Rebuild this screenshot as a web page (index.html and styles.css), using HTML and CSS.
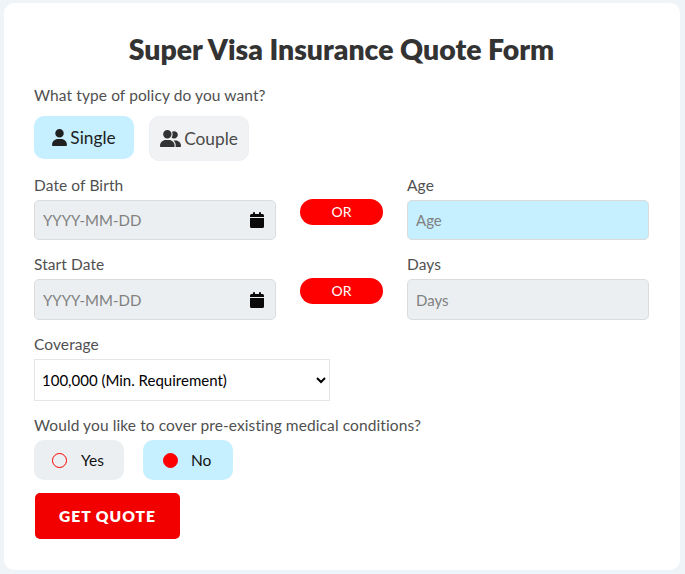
FILE: index.html
```html
<!DOCTYPE html>
<html lang="en">
<head>
    <meta charset="UTF-8">
    <meta name="viewport" content="width=device-width, initial-scale=1.0">
    <title>Super Visa Insurance Quote Form</title>
    <link rel="stylesheet" href="styles.css">
</head>
<body>
    <form class="quote-form">
        <h1>Super Visa Insurance Quote Form</h1>

        <div class="form-group">
            <p class="label">What type of policy do you want?</p>
            <div class="policy-options">
                <button type="button" class="policy-btn active">
                    <svg class="icon-user" viewBox="0 0 448 512"><path d="M224 256A128 128 0 1 0 224 0a128 128 0 1 0 0 256zm-45.7 48C79.8 304 0 383.800 0 482.300C0 498.700 13.300 512 29.700 512H418.300c16.400 0 29.700-13.300 29.700-29.700C448 383.800 368.200 304 269.700 304H178.300z"/></svg>
                    <span>Single</span>
                </button>
                <button type="button" class="policy-btn couple">
                    <svg class="icon-users" viewBox="0 0 640 512"><path d="M96 128a128 128 0 1 1 256 0A128 128 0 1 1 96 128zM0 482.300C0 383.800 79.800 304 178.300 304h91.400C368.200 304 448 383.800 448 482.300c0 16.400-13.300 29.700-29.700 29.700H29.700C13.300 512 0 498.700 0 482.300zM609.300 512H471.400c5.400-9.400 8.600-20.300 8.600-32v-8c0-60.700-27.100-115.200-69.800-151.800c2.400-.1 4.700-.2 7.100-.2h61.400C567.800 320 640 392.200 640 481.300c0 17-13.800 30.700-30.700 30.700zM432 256c-31 0-59-12.600-79.300-32.900C372.400 196.500 384 163.600 384 128c0-26.800-6.600-52.100-18.300-74.300C384.300 40.100 407.200 32 432 32c61.900 0 112 50.100 112 112s-50.100 112-112 112z"/></svg>
                    <span>Couple</span>
                </button>
            </div>
        </div>

        <div class="form-row">
            <div class="form-group">
                <label class="label" for="dob">Date of Birth</label>
                <div class="field">
                    <input type="text" id="dob" placeholder="YYYY-MM-DD">
                    <svg class="icon-calendar" viewBox="0 0 14 16"><path d="M3 1a1 1 0 0 1 2 0v1h4V1a1 1 0 0 1 2 0v1h1.500A1.500 1.500 0 0 1 14 3.500V5H0V3.500A1.500 1.500 0 0 1 1.500 2H3zM0 6h14v8.500a1.500 1.500 0 0 1-1.500 1.500h-11A1.500 1.500 0 0 1 0 14.500z"/></svg>
                </div>
            </div>
            <span class="or">OR</span>
            <div class="form-group">
                <label class="label" for="age">Age</label>
                <div class="field highlight">
                    <input type="text" id="age" placeholder="Age">
                </div>
            </div>
        </div>

        <div class="form-row second">
            <div class="form-group">
                <label class="label" for="start">Start Date</label>
                <div class="field">
                    <input type="text" id="start" placeholder="YYYY-MM-DD">
                    <svg class="icon-calendar" viewBox="0 0 14 16"><path d="M3 1a1 1 0 0 1 2 0v1h4V1a1 1 0 0 1 2 0v1h1.500A1.500 1.500 0 0 1 14 3.500V5H0V3.500A1.500 1.500 0 0 1 1.500 2H3zM0 6h14v8.500a1.500 1.500 0 0 1-1.500 1.500h-11A1.500 1.500 0 0 1 0 14.500z"/></svg>
                </div>
            </div>
            <span class="or">OR</span>
            <div class="form-group">
                <label class="label" for="days">Days</label>
                <div class="field">
                    <input type="text" id="days" placeholder="Days">
                </div>
            </div>
        </div>

        <div class="form-group coverage">
            <label class="label" for="coverage">Coverage</label>
            <select id="coverage">
                <option>100,000 (Min. Requirement)</option>
            </select>
        </div>

        <div class="form-group medical">
            <p class="label">Would you like to cover pre-existing medical conditions?</p>
            <div class="radio-options">
                <label class="radio-btn"><input type="radio" name="medical">Yes</label>
                <label class="radio-btn no"><input type="radio" name="medical" checked>No</label>
            </div>
        </div>

        <button type="submit" class="submit-btn">GET QUOTE</button>
    </form>
</body>
</html>
```
FILE: styles.css
```css
* {
    margin: 0;
    padding: 0;
    box-sizing: border-box;
}

body {
    font-family: Lato, sans-serif;
    font-size: 16px;
    font-variant-ligatures: none;
    background: #eff4f9;
    overflow: hidden;
}

input,
select,
button {
    font-family: inherit;
}

.quote-form {
    width: 676px;
    height: 567px;
    margin: 3px 0 0 4px;
    padding: 26px 31px 0 30px;
    background: #fff;
    border-radius: 10px;
}

h1 {
    font-size: 28.4px;
    font-weight: 800;
    line-height: 40px;
    color: #333;
    text-align: center;
    margin-bottom: 16px;
}

.label {
    display: block;
    line-height: 20px;
    font-size: 15.5px;
    letter-spacing: 0.1px;
    color: #505050;
    margin-bottom: 5px;
}

.policy-options {
    display: flex;
    align-items: flex-start;
    gap: 15px;
    margin-top: 11px;
}

.policy-btn {
    display: flex;
    align-items: center;
    justify-content: center;
    gap: 3px;
    width: 100px;
    height: 43px;
    border: none;
    border-radius: 10px;
    background: #f1f2f4;
    font-size: 17.3px;
    color: #333;
}

.policy-btn svg {
    fill: currentColor;
}

.policy-btn.active {
    background: #c6efff;
    color: #212121;
}

.policy-btn.couple {
    height: 45px;
    border: 1px solid #eceff3;
}

.policy-btn.couple span {
    color: #4a4a4a;
}

.icon-user {
    width: 15px;
    height: 17px;
}

.icon-users {
    width: 21px;
    height: 17px;
}

.form-row {
    display: grid;
    grid-template-columns: 242px 83px 242px;
    gap: 24px;
    margin-top: 14px;
}

.or {
    height: 26px;
    margin-top: 24px;
    border-radius: 13px;
    background: #f00;
    color: #fff;
    font-size: 14px;
    line-height: 26px;
    text-align: center;
}

.field {
    display: flex;
    align-items: center;
    height: 40px;
    padding: 0 11px 0 8px;
    background: #ebeff2;
    border: 1px solid #dcdcdc;
    border-radius: 5px;
}

.second .field {
    height: 41px;
}

.field.highlight {
    background: #c6efff;
}

.field input {
    flex: 1;
    min-width: 0;
    border: none;
    outline: none;
    background: none;
    font-size: 15px;
}

.field input::placeholder {
    color: #808080;
}

.icon-calendar {
    width: 14px;
    height: 16px;
    fill: #0a0a0a;
}

.coverage,
.medical {
    margin-top: 14px;
}

select {
    display: block;
    width: 296px;
    height: 42px;
    padding: 0 3px;
    border: 1px solid #e5e5e5;
    border-radius: 0;
    background: #fff;
    font-size: 15px;
    color: #000;
}

.radio-options {
    display: flex;
    gap: 19px;
}

.radio-btn {
    display: flex;
    align-items: center;
    gap: 14px;
    width: 90px;
    height: 40px;
    padding-left: 18px;
    border-radius: 10px;
    background: #ebeff2;
    font-size: 15.5px;
    color: #111;
}

.radio-btn.no {
    gap: 13px;
    padding-left: 20px;
    background: #c6efff;
}

.radio-btn input {
    appearance: none;
    width: 15px;
    height: 15px;
    border: 1px solid #f00;
    border-radius: 50%;
}

.radio-btn input:checked {
    background: #f00;
}

.submit-btn {
    display: block;
    width: 145px;
    height: 46px;
    margin: 13px 0 0 1px;
    border: none;
    border-radius: 5px;
    background: #f20000;
    color: #fff;
    font-size: 15.6px;
    font-weight: 800;
    letter-spacing: 1px;
}
```
